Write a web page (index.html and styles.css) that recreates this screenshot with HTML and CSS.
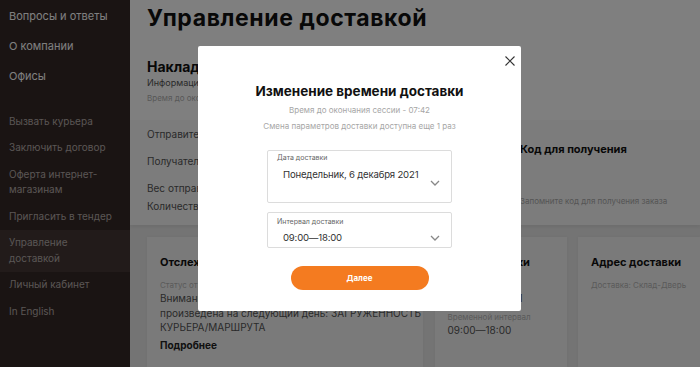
FILE: index.html
```html
<!DOCTYPE html>
<html lang="ru">
<head>
    <meta charset="UTF-8">
    <meta name="viewport" content="width=device-width, initial-scale=1.0">
    <title>Управление доставкой</title>
    <link rel="stylesheet" href="styles.css">
</head>
<body>

    <!-- Side menu -->
    <aside class="sidebar">
        <nav class="nav-main">
            <a href="#">Вопросы и ответы</a>
            <a href="#">О компании</a>
            <a href="#">Офисы</a>
        </nav>
        <nav class="nav-sub">
            <a href="#">Вызвать курьера</a>
            <a href="#">Заключить договор</a>
            <a href="#">Оферта интернет-магазинам</a>
            <a href="#">Пригласить в тендер</a>
            <a href="#" class="active">Управление доставкой</a>
            <a href="#">Личный кабинет</a>
            <a href="#">In English</a>
        </nav>
    </aside>

    <main class="content">
        <h1 class="page-title">Управление доставкой</h1>

        <section class="waybill">
            <h2>Накладная № 1094587321</h2>
            <p class="waybill-info">Информация об отправлении</p>
            <p class="waybill-time">Время до окончания сессии - 07:42</p>
        </section>

        <section class="details">
            <div class="details-rows">
                <p class="row">Отправитель</p>
                <p class="row">Получатель</p>
                <p class="row row-tight">Вес отправления</p>
                <p class="row row-close">Количество мест</p>
            </div>
            <div class="pickup-code">
                <h3>Код для получения</h3>
                <p>Запомните код для получения заказа</p>
            </div>
        </section>

        <section class="cards">
            <div class="card">
                <h3>Отслеживание</h3>
                <p class="card-label">Статус отправления</p>
                <p class="card-text card-text-status">Внимание! Доставка вашего заказа будет<br>произведена на следующий день: ЗАГРУЖЕННОСТЬ<br>КУРЬЕРА/МАРШРУТА</p>
                <a href="#" class="card-more">Подробнее</a>
            </div>
            <div class="card">
                <h3>Дата доставки</h3>
                <p class="card-label">Дата</p>
                <p class="card-text">6 декабря 2021</p>
                <p class="card-label card-label-gap">Временной интервал</p>
                <p class="card-text">09:00—18:00</p>
            </div>
            <div class="card">
                <h3>Адрес доставки</h3>
                <p class="card-label">Доставка: Склад-Дверь</p>
            </div>
        </section>
    </main>

    <!-- Modal: change delivery time -->
    <div class="overlay"></div>
    <div class="modal">
        <button class="modal-close" aria-label="Закрыть">
            <svg width="10" height="10" viewBox="0 0 10 10">
                <path d="M0.5 0.5 L9.5 9.5 M9.5 0.5 L0.5 9.5" stroke="#333" stroke-width="1.1" fill="none"/>
            </svg>
        </button>
        <h3 class="modal-title">Изменение времени доставки</h3>
        <p class="modal-note">Время до окончания сессии - 07:42</p>
        <p class="modal-note modal-note-second">Смена параметров доставки доступна еще 1 раз</p>

        <div class="field field-date">
            <span class="field-label">Дата доставки</span>
            <span class="field-value">Понедельник, 6 декабря 2021</span>
            <svg class="field-arrow" width="10" height="6" viewBox="0 0 10 6">
                <polyline points="1,1 5,5 9,1" stroke="#888" stroke-width="1.3" fill="none"/>
            </svg>
        </div>

        <div class="field field-interval">
            <span class="field-label">Интервал доставки</span>
            <span class="field-value">09:00—18:00</span>
            <svg class="field-arrow" width="10" height="6" viewBox="0 0 10 6">
                <polyline points="1,1 5,5 9,1" stroke="#888" stroke-width="1.3" fill="none"/>
            </svg>
        </div>

        <button class="next-btn">Далее</button>
    </div>

</body>
</html>
```

FILE: styles.css
```css
/* Global Styles */
body {
    font-family: Inter, "Noto Sans", sans-serif;
    margin: 0;
    padding: 0;
    display: flex;
    height: 367px;
    overflow: hidden;
    background-color: #ffffff;
    color: #444;
}

p, h1, h2, h3 {
    margin: 0;
}

/* Sidebar */
.sidebar {
    width: 130px;
    flex-shrink: 0;
    background-color: #342826;
}

.sidebar a {
    display: block;
    text-decoration: none;
}

.nav-main {
    padding-top: 7px;
}

.nav-main a {
    color: #ffffff;
    font-size: 11px;
    line-height: 18px;
    padding: 0 9px 12px;
}

.nav-sub {
    padding-top: 11px;
}

.nav-sub a {
    color: #b4aca9;
    font-size: 10px;
    line-height: 15.5px;
    padding: 5.5px 9px;
}

.nav-sub a.active {
    background-color: #443735;
}

/* Main content */
.content {
    flex: 1;
    min-width: 0;
    display: flex;
    flex-direction: column;
    overflow: hidden;
    background-color: #ffffff;
}

.page-title {
    font-size: 23px;
    font-weight: 700;
    line-height: 32px;
    letter-spacing: 0.6px;
    color: #111;
    padding: 2px 17px 0;
    white-space: nowrap;
}

.waybill {
    padding: 24px 17px 16px;
}

.waybill h2 {
    font-size: 14px;
    line-height: 18px;
    color: #111;
}

.waybill-info {
    font-size: 9px;
    line-height: 14px;
    color: #555;
}

.waybill-time {
    font-size: 8px;
    line-height: 12px;
    margin-top: 2px;
    color: #b0b0b0;
}

.details {
    display: grid;
    grid-template-columns: 356px 1fr;
    column-gap: 17px;
    flex-shrink: 0;
    height: 105px;
    padding: 0 17px;
    background-color: #f8f8f8;
    box-shadow: 0 2px 3px rgba(0, 0, 0, 0.06);
    position: relative;
}

.details-rows {
    padding-top: 7px;
}

.row {
    font-size: 10px;
    line-height: 14px;
    color: #555;
    margin-bottom: 13px;
}

.row-tight {
    margin-bottom: 4px;
}

.pickup-code {
    padding-top: 21px;
}

.pickup-code h3 {
    font-size: 11px;
    line-height: 16px;
    color: #111;
}

.pickup-code p {
    font-size: 8px;
    line-height: 12px;
    color: #aaa;
    margin-top: 38px;
}

/* Cards */
.cards {
    flex: 1;
    display: grid;
    grid-template-columns: 276px 132px 1fr;
    column-gap: 11.5px;
    padding: 12px 0 0 17px;
    background-color: #e8e8e8;
}

.card {
    background-color: #f4f4f4;
    padding: 18px 12px 0 13px;
    box-shadow: 0 0 3px rgba(0, 0, 0, 0.04);
}

.card h3 {
    font-size: 11px;
    line-height: 14px;
    color: #111;
}

.card-label {
    font-size: 8px;
    line-height: 12px;
    color: #b5b5b5;
    margin-top: 10px;
    white-space: nowrap;
}

.card-label-gap {
    margin-top: 5px;
}

.card-text {
    font-size: 10px;
    line-height: 14.5px;
    color: #555;
}

.card-text-status {
    white-space: nowrap;
}

.card-more {
    display: block;
    margin-top: 3px;
    font-size: 10px;
    line-height: 14px;
    font-weight: 700;
    color: #222;
    text-decoration: none;
}

/* Modal */
.overlay {
    position: fixed;
    top: 0;
    left: 0;
    right: 0;
    bottom: 0;
    background-color: rgba(0, 0, 0, 0.5);
}

.modal {
    position: fixed;
    left: 198px;
    top: 46px;
    width: 323px;
    height: 265px;
    box-sizing: border-box;
    padding-top: 36px;
    background-color: #ffffff;
    border-radius: 2px;
    display: flex;
    flex-direction: column;
    align-items: center;
}

.modal-close {
    position: absolute;
    top: 8px;
    right: 6px;
    width: 11px;
    height: 11px;
    padding: 0;
    border: none;
    background: none;
    cursor: pointer;
}

.modal-title {
    font-size: 13.5px;
    font-weight: 700;
    line-height: 18px;
    color: #111;
}

.modal-note {
    font-size: 8px;
    line-height: 12px;
    color: #a6a6a6;
    margin-top: 4px;
}

.modal-note-second {
    margin-top: 4px;
}

.field {
    position: relative;
    width: 185px;
    box-sizing: border-box;
    border: 1px solid #dcdcdc;
    border-radius: 2px;
    padding: 2px 9px 0;
    display: flex;
    flex-direction: column;
}

.field-date {
    margin-top: 18px;
    height: 53px;
}

.field-interval {
    margin-top: 9px;
    height: 36px;
    padding-top: 3.5px;
}

.field-label {
    font-size: 7px;
    line-height: 9px;
    color: #666;
}

.field-value {
    font-size: 9.6px;
    line-height: 14px;
    letter-spacing: -0.2px;
    color: #333;
    margin-top: 5.5px;
    padding-left: 6px;
}

.field-interval .field-value {
    margin-top: 5px;
}

.field-arrow {
    position: absolute;
    right: 11px;
}

.field-date .field-arrow {
    top: 29px;
}

.field-interval .field-arrow {
    top: 22px;
}

.next-btn {
    margin-top: 18px;
    width: 138px;
    height: 24px;
    border: none;
    border-radius: 12px;
    background-color: #f47b20;
    color: #ffffff;
    font-family: inherit;
    font-size: 8px;
    font-weight: 700;
    cursor: pointer;
}
```
